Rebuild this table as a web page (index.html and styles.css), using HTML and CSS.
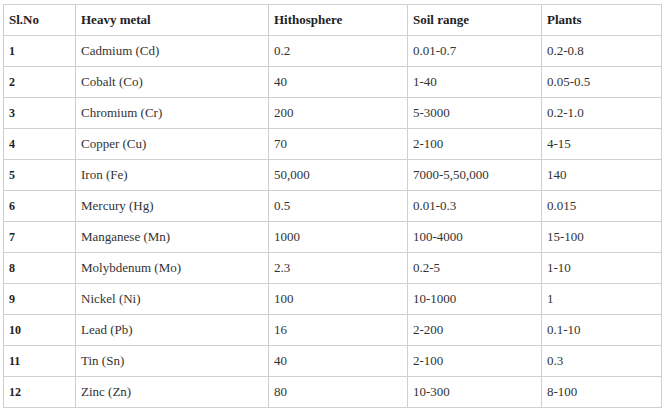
FILE: index.html
```html
<!DOCTYPE html>
<html>
<head>
<meta charset="utf-8">
<link rel="stylesheet" href="styles.css">
</head>
<body>
<table class="metals">
  <colgroup>
    <col class="c1"><col class="c2"><col class="c3"><col class="c4"><col class="c5">
  </colgroup>
  <thead>
    <tr><th>Sl.No</th><th>Heavy metal</th><th>Hithosphere</th><th>Soil range</th><th>Plants</th></tr>
  </thead>
  <tbody>
    <tr><td class="num">1</td><td>Cadmium (Cd)</td><td>0.2</td><td>0.01-0.7</td><td>0.2-0.8</td></tr>
    <tr><td class="num">2</td><td>Cobalt (Co)</td><td>40</td><td>1-40</td><td>0.05-0.5</td></tr>
    <tr><td class="num">3</td><td>Chromium (Cr)</td><td>200</td><td>5-3000</td><td>0.2-1.0</td></tr>
    <tr><td class="num">4</td><td>Copper (Cu)</td><td>70</td><td>2-100</td><td>4-15</td></tr>
    <tr><td class="num">5</td><td>Iron (Fe)</td><td>50,000</td><td>7000-5,50,000</td><td>140</td></tr>
    <tr><td class="num">6</td><td>Mercury (Hg)</td><td>0.5</td><td>0.01-0.3</td><td>0.015</td></tr>
    <tr><td class="num">7</td><td>Manganese (Mn)</td><td>1000</td><td>100-4000</td><td>15-100</td></tr>
    <tr><td class="num">8</td><td>Molybdenum (Mo)</td><td>2.3</td><td>0.2-5</td><td>1-10</td></tr>
    <tr><td class="num">9</td><td>Nickel (Ni)</td><td>100</td><td>10-1000</td><td>1</td></tr>
    <tr><td class="num">10</td><td>Lead (Pb)</td><td>16</td><td>2-200</td><td>0.1-10</td></tr>
    <tr><td class="num">11</td><td>Tin (Sn)</td><td>40</td><td>2-100</td><td>0.3</td></tr>
    <tr><td class="num">12</td><td>Zinc (Zn)</td><td>80</td><td>10-300</td><td>8-100</td></tr>
  </tbody>
</table>
</body>
</html>
```
FILE: styles.css
```css
html, body {
  margin: 0;
  padding: 0;
  background: #fff;
}
body {
  padding: 4px 0 0 3px;
  font-family: "Liberation Serif", "Times New Roman", serif;
  font-size: 13px;
  color: #333;
}
.metals {
  border-collapse: collapse;
  table-layout: fixed;
  width: 658px;
}
.c1 { width: 72px; }
.c2 { width: 193px; }
.c3 { width: 139px; }
.c4 { width: 134px; }
.c5 { width: 120px; }
.metals th,
.metals td {
  border: 1px solid #cfcfcf;
  height: 31px;
  padding: 0 0 0 5px;
  text-align: left;
  vertical-align: middle;
  box-sizing: border-box;
  white-space: nowrap;
}
.metals th {
  font-weight: bold;
  color: #222;
}
.metals td.num {
  font-weight: bold;
  font-size: 12px;
  color: #222;
}
```
